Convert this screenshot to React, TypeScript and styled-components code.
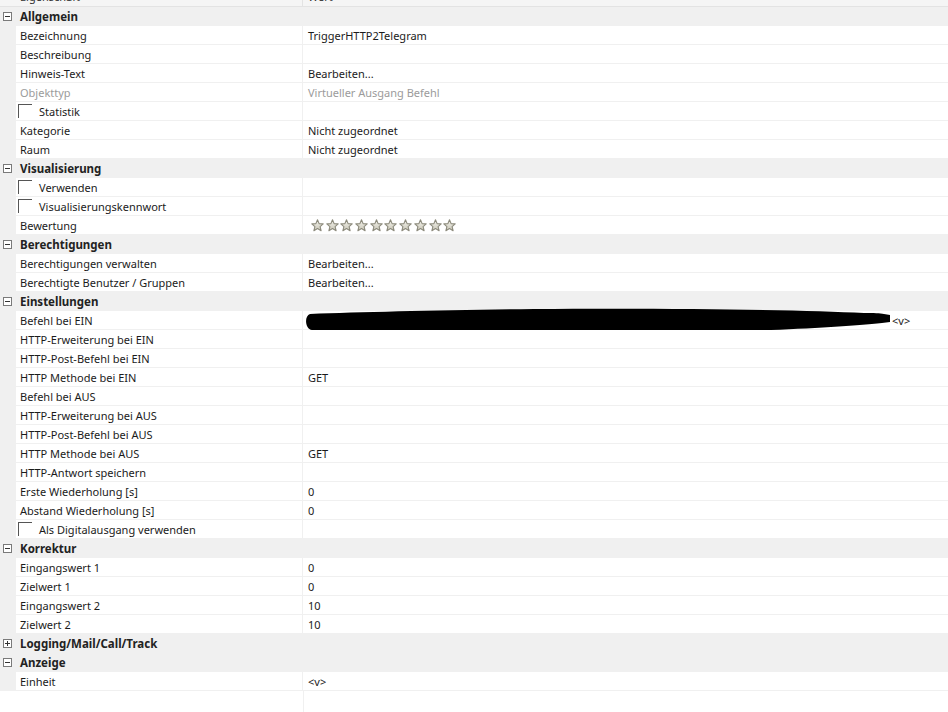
import React from "react";
import styled, { createGlobalStyle } from "styled-components";

const GlobalStyle = createGlobalStyle`
	html, body {
		margin: 0;
		padding: 0;
		background: #ffffff;
	}
	body {
		font-family: "Noto Sans", "Open Sans", sans-serif;
		font-size: 11px;
		color: #1b1b1b;
	}
`;

const Grid = styled.div`
	width: 948px;
	height: 712px;
	overflow: hidden;
	display: flex;
	flex-direction: column;
	background: #ffffff;
`;

const Header = styled.div`
	height: 6px;
	flex: none;
	display: flex;
	align-items: flex-end;
	overflow: hidden;
	background: #f5f5f5;
	border-bottom: 1px solid #e3e3e3;
`;

const HeaderCell = styled.div<{ $w?: number }>`
	height: 19px;
	line-height: 19px;
	flex: ${(p) => (p.$w ? `0 0 ${p.$w}px` : "1")};
	padding-left: ${(p) => (p.$w ? 20 : 5)}px;
	box-sizing: border-box;
	border-right: ${(p) => (p.$w ? "1px solid #e3e3e3" : "none")};
	color: #333;
`;

const CategoryRow = styled.div`
	height: 19px;
	flex: none;
	display: flex;
	align-items: center;
	background: #f0f0f0;
	font-weight: 700;
	font-size: 11.5px;
	color: #222;
`;

const Expander = styled.span`
	width: 9px;
	height: 9px;
	margin: 0 8px 0 3px;
	box-sizing: border-box;
	border: 1px solid #7a7a7a;
	background: #fff;
	position: relative;
	&::before {
		content: "";
		position: absolute;
		left: 1px;
		right: 1px;
		top: 3px;
		height: 1px;
		background: #333;
	}
`;

const ExpanderPlus = styled(Expander)`
	&::after {
		content: "";
		position: absolute;
		top: 1px;
		bottom: 1px;
		left: 3px;
		width: 1px;
		background: #333;
	}
`;

const Row = styled.div`
	height: 19px;
	flex: none;
	display: flex;
	background: #f0f0f0;
`;

const NameCell = styled.div<{ $muted?: boolean }>`
	margin-left: 16px;
	width: 287px;
	flex: none;
	display: flex;
	align-items: center;
	padding-left: 4px;
	box-sizing: border-box;
	background: #fff;
	border-bottom: 1px solid #f0f0f0;
	border-right: 1px solid #f0f0f0;
	color: ${(p) => (p.$muted ? "#9b9b9b" : "inherit")};
	white-space: nowrap;
`;

const ValueCell = styled.div<{ $muted?: boolean }>`
	flex: 1;
	display: flex;
	align-items: center;
	padding-left: 5px;
	background: #fff;
	border-bottom: 1px solid #f0f0f0;
	color: ${(p) => (p.$muted ? "#9b9b9b" : "inherit")};
	white-space: nowrap;
`;

const Check = styled.span`
	width: 14px;
	height: 14px;
	margin: 0 7px 0 -2px;
	box-sizing: border-box;
	border-top: 1px solid #555;
	border-left: 1px solid #555;
`;

const Stars = styled.div`
	display: flex;
	gap: 1.7px;
	margin-left: 3px;
`;

const Redacted = styled.svg`
	margin: -5px 0 -5px -4px;
	flex: none;
`;

const Filler = styled.div`
	flex: 1;
	display: flex;
`;

const FillerLeft = styled.div`
	width: 303px;
	border-right: 1px solid #f0f0f0;
`;

type Item =
	| { kind: "cat"; label: string; collapsed?: boolean }
	| { kind: "row"; label: string; value?: React.ReactNode; muted?: boolean; check?: boolean };

const Star = () => (
	<svg width="13" height="13" viewBox="0 0 13 13">
		<defs>
			<linearGradient id="sg" x1="0" y1="0" x2="0" y2="1">
				<stop offset="0" stopColor="#f4f4ee" />
				<stop offset="1" stopColor="#c9c6b6" />
			</linearGradient>
		</defs>
		<path
			d="M6.5 0.8 L8.1 4.6 L12.2 4.9 L9.1 7.6 L10.1 11.7 L6.5 9.5 L2.9 11.7 L3.9 7.6 L0.8 4.9 L4.9 4.6 Z"
			fill="url(#sg)"
			stroke="#8c8a7c"
			strokeWidth="1.1"
			strokeLinejoin="round"
		/>
	</svg>
);

const rating = (
	<Stars>
		{Array.from({ length: 10 }).map((_, i) => (
			<Star key={i} />
		))}
	</Stars>
);

const command = (
	<>
		<Redacted width="588" height="26" viewBox="0 0 588 26">
			<path
				d="M6 7 C60 5 140 3 230 2 C380 1 500 3 560 6 C570 6 576 6 580 7 L586 8 L586 15 L578 16 C540 20 450 25 380 25 C250 25 120 24 8 23 C1 22 0 9 6 7 Z"
				fill="#000"
			/>
		</Redacted>
		<span>&lt;v&gt;</span>
	</>
);

const items: Item[] = [
	{ kind: "cat", label: "Allgemein" },
	{ kind: "row", label: "Bezeichnung", value: "TriggerHTTP2Telegram" },
	{ kind: "row", label: "Beschreibung" },
	{ kind: "row", label: "Hinweis-Text", value: "Bearbeiten..." },
	{ kind: "row", label: "Objekttyp", value: "Virtueller Ausgang Befehl", muted: true },
	{ kind: "row", label: "Statistik", check: true },
	{ kind: "row", label: "Kategorie", value: "Nicht zugeordnet" },
	{ kind: "row", label: "Raum", value: "Nicht zugeordnet" },
	{ kind: "cat", label: "Visualisierung" },
	{ kind: "row", label: "Verwenden", check: true },
	{ kind: "row", label: "Visualisierungskennwort", check: true },
	{ kind: "row", label: "Bewertung", value: rating },
	{ kind: "cat", label: "Berechtigungen" },
	{ kind: "row", label: "Berechtigungen verwalten", value: "Bearbeiten..." },
	{ kind: "row", label: "Berechtigte Benutzer / Gruppen", value: "Bearbeiten..." },
	{ kind: "cat", label: "Einstellungen" },
	{ kind: "row", label: "Befehl bei EIN", value: command },
	{ kind: "row", label: "HTTP-Erweiterung bei EIN" },
	{ kind: "row", label: "HTTP-Post-Befehl bei EIN" },
	{ kind: "row", label: "HTTP Methode bei EIN", value: "GET" },
	{ kind: "row", label: "Befehl bei AUS" },
	{ kind: "row", label: "HTTP-Erweiterung bei AUS" },
	{ kind: "row", label: "HTTP-Post-Befehl bei AUS" },
	{ kind: "row", label: "HTTP Methode bei AUS", value: "GET" },
	{ kind: "row", label: "HTTP-Antwort speichern" },
	{ kind: "row", label: "Erste Wiederholung [s]", value: "0" },
	{ kind: "row", label: "Abstand Wiederholung [s]", value: "0" },
	{ kind: "row", label: "Als Digitalausgang verwenden", check: true },
	{ kind: "cat", label: "Korrektur" },
	{ kind: "row", label: "Eingangswert 1", value: "0" },
	{ kind: "row", label: "Zielwert 1", value: "0" },
	{ kind: "row", label: "Eingangswert 2", value: "10" },
	{ kind: "row", label: "Zielwert 2", value: "10" },
	{ kind: "cat", label: "Logging/Mail/Call/Track", collapsed: true },
	{ kind: "cat", label: "Anzeige" },
	{ kind: "row", label: "Einheit", value: "<v>" },
];

export default function App() {
	return (
		<>
			<GlobalStyle />
			<Grid>
				<Header>
					<HeaderCell $w={303}>Eigenschaft</HeaderCell>
					<HeaderCell>Wert</HeaderCell>
				</Header>
				{items.map((it, i) =>
					it.kind === "cat" ? (
						<CategoryRow key={i}>
							{it.collapsed ? <ExpanderPlus /> : <Expander />}
							{it.label}
						</CategoryRow>
					) : (
						<Row key={i}>
							<NameCell $muted={it.muted}>
								{it.check && <Check />}
								{it.label}
							</NameCell>
							<ValueCell $muted={it.muted}>{it.value}</ValueCell>
						</Row>
					)
				)}
				<Filler>
					<FillerLeft />
				</Filler>
			</Grid>
		</>
	);
}
